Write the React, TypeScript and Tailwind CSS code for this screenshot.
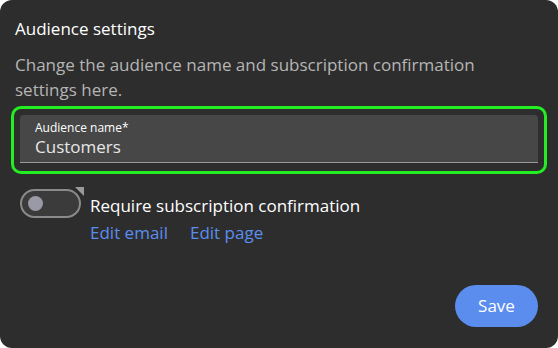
import React from "react";

export default function App() {
  return (
    <div className="w-[558px] h-[348px] bg-white" style={{ fontFamily: "'Open Sans', 'Noto Sans', sans-serif" }}>
      <div className="w-full h-full bg-[#2d2d2d] rounded-[12px] flex flex-col px-[15px] pt-[17px]">
        <div className="text-[17px] leading-[24px] text-white">Audience settings</div>
        <div className="mt-[11px] max-w-[490px] text-[17px] leading-[25px] text-[#b5b5b5]">
          Change the audience name and subscription confirmation settings here.
        </div>
        <div className="mt-[4px] -mx-[4px] border-[3px] border-[#22ee22] rounded-[10px] p-[6px] pb-[8px]">
          <div className="bg-[#474747] rounded-t-[4px] border-b border-[#9a9a9a] px-[15px] pt-[6px] h-[48px] flex flex-col">
            <div className="text-[12px] leading-[13px] text-white">Audience name*</div>
            <div className="mt-[3px] text-[17px] leading-[20px] text-[#e6e6e6]">Customers</div>
          </div>
        </div>
        <div className="mt-[15px] flex items-start pl-[5px]">
          <div className="relative w-[61px] h-[29px] rounded-full border-2 border-[#8a8a8a] bg-[#3b3b3b] flex items-center pl-[6px]">
            <div className="w-[15px] h-[15px] rounded-full bg-[#9a99a6]" />
            <div className="absolute -top-[4px] -right-[5px] w-0 h-0 border-l-[9px] border-l-transparent border-t-[9px] border-t-[#9a9a9a]" />
          </div>
          <div className="ml-[9px] mt-[4px] flex flex-col">
            <div className="text-[17px] leading-[26px] text-white">Require subscription confirmation</div>
            <div className="flex gap-[22px] text-[17px] leading-[27px] text-[#5b8def]">
              <span>Edit email</span>
              <span>Edit page</span>
            </div>
          </div>
        </div>
        <div className="flex-1" />
        <div className="flex justify-end pb-[21px] pr-[5px]">
          <button className="w-[83px] h-[42px] rounded-full bg-[#5b8def] text-white text-[17px]">Save</button>
        </div>
      </div>
    </div>
  );
}
